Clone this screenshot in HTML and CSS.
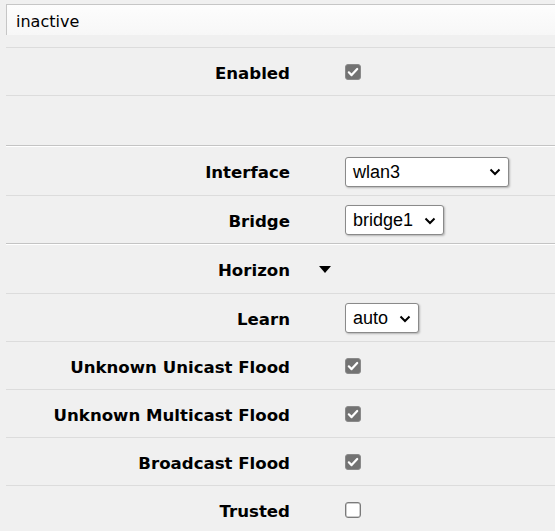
FILE: index.html
```html
<!DOCTYPE html>
<html>
<head>
<meta charset="utf-8">
<link rel="stylesheet" href="styles.css">
</head>
<body>
<div class="page">
  <div class="header">inactive</div>

  <div class="group group-first">
    <div class="row">
      <div class="label">Enabled</div>
      <div class="control">
        <span class="check checked"><svg viewBox="0 0 16 16" width="16" height="16"><path d="M3.8 8.3 L6.6 11.1 L12.2 5" fill="none" stroke="#fff" stroke-width="2.2" stroke-linecap="round" stroke-linejoin="round"/></svg></span>
      </div>
    </div>
    <div class="row row-empty"></div>
  </div>

  <div class="group">
    <div class="row">
      <div class="label">Interface</div>
      <div class="control">
        <div class="select select-wide"><span>wlan3</span><svg class="chev" viewBox="0 0 12 8" width="12" height="8"><path d="M1.5 1.5 L6 6 L10.5 1.5" fill="none" stroke="#000" stroke-width="2"/></svg></div>
      </div>
    </div>
    <div class="row">
      <div class="label">Bridge</div>
      <div class="control">
        <div class="select"><span>bridge1</span><svg class="chev" viewBox="0 0 12 8" width="12" height="8"><path d="M1.5 1.5 L6 6 L10.5 1.5" fill="none" stroke="#000" stroke-width="2"/></svg></div>
      </div>
    </div>
  </div>

  <div class="group">
    <div class="row">
      <div class="label">Horizon</div>
      <div class="control">
        <svg class="toggle" viewBox="0 0 12 7" width="12" height="7"><path d="M0 0 L12 0 L6 7 Z" fill="#000"/></svg>
      </div>
    </div>
    <div class="row">
      <div class="label">Learn</div>
      <div class="control">
        <div class="select"><span>auto</span><svg class="chev" viewBox="0 0 12 8" width="12" height="8"><path d="M1.5 1.5 L6 6 L10.5 1.5" fill="none" stroke="#000" stroke-width="2"/></svg></div>
      </div>
    </div>
    <div class="row">
      <div class="label">Unknown Unicast Flood</div>
      <div class="control">
        <span class="check checked"><svg viewBox="0 0 16 16" width="16" height="16"><path d="M3.8 8.3 L6.6 11.1 L12.2 5" fill="none" stroke="#fff" stroke-width="2.2" stroke-linecap="round" stroke-linejoin="round"/></svg></span>
      </div>
    </div>
    <div class="row">
      <div class="label">Unknown Multicast Flood</div>
      <div class="control">
        <span class="check checked"><svg viewBox="0 0 16 16" width="16" height="16"><path d="M3.8 8.3 L6.6 11.1 L12.2 5" fill="none" stroke="#fff" stroke-width="2.2" stroke-linecap="round" stroke-linejoin="round"/></svg></span>
      </div>
    </div>
    <div class="row">
      <div class="label">Broadcast Flood</div>
      <div class="control">
        <span class="check checked"><svg viewBox="0 0 16 16" width="16" height="16"><path d="M3.8 8.3 L6.6 11.1 L12.2 5" fill="none" stroke="#fff" stroke-width="2.2" stroke-linecap="round" stroke-linejoin="round"/></svg></span>
      </div>
    </div>
    <div class="row">
      <div class="label">Trusted</div>
      <div class="control">
        <span class="check"></span>
      </div>
    </div>
  </div>
</div>
</body>
</html>
```

FILE: styles.css
```css
html, body {
  margin: 0;
  padding: 0;
  background: #f0f0f0;
}

.page {
  padding: 4px 0 0 6px;
  font-family: "DejaVu Sans", Verdana, sans-serif;
  color: #000;
}

.header {
  box-sizing: border-box;
  height: 31px;
  border-top: 1px solid #c6c6c6;
  border-left: 1px solid #c6c6c6;
  background: linear-gradient(#fdfdfd, #f7f7f7);
  padding: 3px 0 0 9px;
  font-size: 16px;
  line-height: 27px;
}

.group {
  border-top: 1px solid #c4c4c4;
}

.group-first {
  margin-top: 12px;
  border-top: none;
}

.row {
  display: grid;
  grid-template-columns: 284px 1fr;
  column-gap: 55px;
  align-items: center;
  height: 47px;
  border-top: 1px solid #dcdcdc;
}

.group .row:first-child {
  height: 48px;
  border-top-color: #ffffff;
}

.group-first .row:first-child {
  height: 47px;
  border-top-color: #dcdcdc;
}

.row-empty {
  height: 49px;
}

.label {
  text-align: right;
  font-weight: bold;
  font-size: 16.6px;
  padding-top: 3px;
}

.control {
  display: flex;
  align-items: center;
}

.select {
  box-sizing: border-box;
  height: 30px;
  display: inline-flex;
  align-items: center;
  gap: 11px;
  padding: 1px 7px 0 7px;
  margin-top: 1px;
  background: #fff;
  border: 1px solid #8a8a8a;
  border-radius: 3px;
  box-shadow: 1px 1px 2px rgba(0, 0, 0, 0.25);
  font-family: "Liberation Sans", Arial, sans-serif;
  font-size: 18px;
}

.select-wide {
  width: 164px;
  justify-content: space-between;
}

.chev {
  display: block;
}

.check {
  box-sizing: border-box;
  width: 16px;
  height: 16px;
  border-radius: 3px;
  border: 1px solid #7a7a7a;
  background: #fff;
  display: block;
  position: relative;
  box-shadow: inset 0 0 0 0.5px #9a9a9a;
}

.check.checked {
  background: #737373;
  border-color: #8a8a8a;
  box-shadow: none;
}

.check svg {
  position: absolute;
  left: -1px;
  top: -1px;
}

.toggle {
  display: block;
  margin-left: -26px;
  margin-top: 0;
}
```
